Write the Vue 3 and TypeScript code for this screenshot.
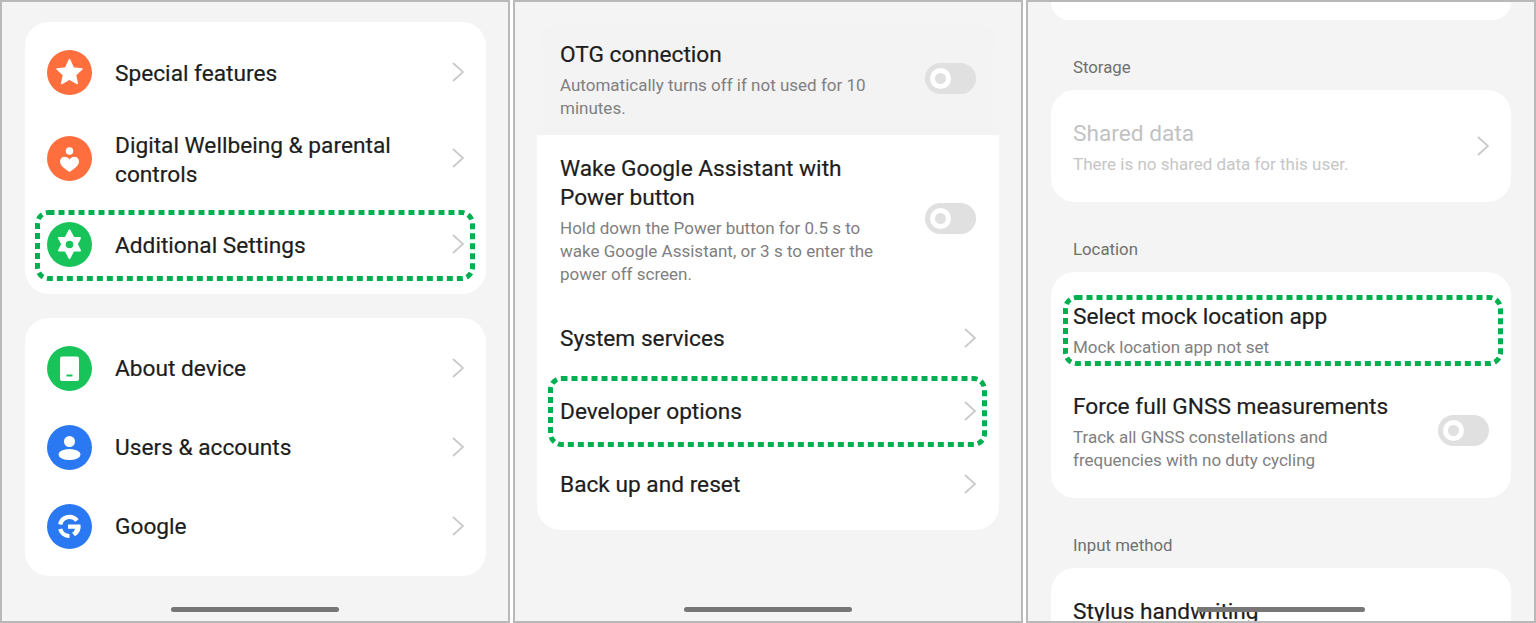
<template>
  <div class="page">
    <!-- Left screen -->
    <section class="screen left-screen">
      <div class="card first-card">
        <div v-for="item in mainItems" :key="item.title" class="row icon-row" :class="{ tall: item.tall }">
          <svg class="round-icon" viewBox="0 0 45 45" width="45" height="45">
            <circle cx="22.5" cy="22.5" r="22.5" :fill="item.color" />
            <template v-if="item.icon === 'star'">
              <polygon points="22.5,9.500 26.300,17.900 35,18.900 28.500,25 30.300,33.500 22.5,29.200 14.700,33.500 16.500,25 10,18.900 18.700,17.900" fill="#fff" stroke="#fff" stroke-width="1.500" stroke-linejoin="round" />
            </template>
            <template v-else-if="item.icon === 'care'">
              <circle cx="22.5" cy="15" r="3.8" fill="#fff" />
              <path d="M22.5 36c-5-3.4-9.5-6.6-9.5-10.6 0-2.8 2.1-4.6 4.6-4.6 2 0 3.8 1 4.9 2.7 1.100-1.700 2.900-2.700 4.900-2.700 2.500 0 4.600 1.800 4.600 4.600 0 4-4.500 7.200-9.500 10.600z" fill="#fff" />
            </template>
            <template v-else>
              <polygon points="22.5,8.500 33,28.500 12,28.500" fill="#fff" stroke="#fff" stroke-width="2" stroke-linejoin="round" />
              <polygon points="22.5,36 12,16 33,16" fill="#fff" stroke="#fff" stroke-width="2" stroke-linejoin="round" />
              <circle cx="22.5" cy="22.5" r="3.800" :fill="item.color" />
            </template>
          </svg>
          <span class="title">{{ item.title }}</span>
          <svg class="chevron" viewBox="0 0 12 20" width="12" height="20"><path d="M1 1l10 9-10 9" /></svg>
          <svg v-if="item.marked" class="mark mark-additional" width="440" height="71">
            <rect x="2.500" y="2.500" width="435" height="66" rx="11" />
          </svg>
        </div>
      </div>

      <div class="card second-card">
        <div v-for="item in deviceItems" :key="item.title" class="row icon-row">
          <svg class="round-icon" viewBox="0 0 45 45" width="45" height="45">
            <circle cx="22.5" cy="22.5" r="22.5" :fill="item.color" />
            <template v-if="item.icon === 'device'">
              <rect x="13" y="10.500" width="19" height="24.500" rx="2" fill="#fff" />
              <rect x="19.500" y="28.500" width="6" height="2" :fill="item.color" />
            </template>
            <template v-else-if="item.icon === 'user'">
              <circle cx="22.500" cy="16.500" r="5.500" fill="#fff" />
              <ellipse cx="22.500" cy="29.500" rx="11" ry="5.500" fill="#fff" />
            </template>
            <template v-else>
              <path d="M30 16.500A9.500 9.500 0 0 0 13.200 20.500M13.200 25A9.500 9.500 0 0 0 22.500 32" fill="none" stroke="#fff" stroke-width="4.200" />
              <path d="M21 20.500h12.500a11 11 0 0 1-5.500 11.800l-3-3.500c1.800-1 2.800-2.500 3-4h-7z" fill="#fff" />
            </template>
          </svg>
          <span class="title">{{ item.title }}</span>
          <svg class="chevron" viewBox="0 0 12 20" width="12" height="20"><path d="M1 1l10 9-10 9" /></svg>
        </div>
      </div>
      <div class="home-bar"></div>
    </section>

    <!-- Middle screen -->
    <section class="screen middle-screen">
      <div class="card middle-card">
        <div class="row text-row otg-row">
          <div class="text">
            <div class="title">OTG connection</div>
            <div class="sub">Automatically turns off if not used for 10 minutes.</div>
          </div>
          <div class="toggle"><span class="knob"></span></div>
        </div>
        <div class="row text-row wake-row">
          <div class="text">
            <div class="title">Wake Google Assistant with Power button</div>
            <div class="sub">Hold down the Power button for 0.5 s to wake Google Assistant, or 3 s to enter the power off screen.</div>
          </div>
          <div class="toggle"><span class="knob"></span></div>
        </div>
        <div v-for="item in systemItems" :key="item.title" class="row plain-row">
          <span class="title">{{ item.title }}</span>
          <svg class="chevron" viewBox="0 0 12 20" width="12" height="20"><path d="M1 1l10 9-10 9" /></svg>
          <svg v-if="item.marked" class="mark mark-developer" width="439" height="71">
            <rect x="2.500" y="2.500" width="434" height="66" rx="11" />
          </svg>
        </div>
      </div>
      <div class="home-bar"></div>
    </section>

    <!-- Right screen -->
    <section class="screen right-screen">
      <div class="card stub-card"></div>

      <div class="section-label">Storage</div>
      <div class="card">
        <div class="row text-row shared-row">
          <div class="text">
            <div class="title disabled">Shared data</div>
            <div class="sub disabled">There is no shared data for this user.</div>
          </div>
          <svg class="chevron" viewBox="0 0 12 20" width="12" height="20"><path d="M1 1l10 9-10 9" /></svg>
        </div>
      </div>

      <div class="section-label">Location</div>
      <div class="card location-card">
        <div class="row text-row mock-row">
          <div class="text">
            <div class="title">Select mock location app</div>
            <div class="sub">Mock location app not set</div>
          </div>
          <svg class="mark mark-mock" width="440" height="71">
            <rect x="2.500" y="2.500" width="435" height="66" rx="11" />
          </svg>
        </div>
        <div class="row text-row gnss-row">
          <div class="text">
            <div class="title">Force full GNSS measurements</div>
            <div class="sub">Track all GNSS constellations and frequencies with no duty cycling</div>
          </div>
          <div class="toggle"><span class="knob"></span></div>
        </div>
      </div>

      <div class="section-label">Input method</div>
      <div class="card">
        <div class="row stylus-row">
          <div class="title">Stylus handwriting</div>
        </div>
      </div>
      <div class="home-bar"></div>
    </section>
  </div>
</template>

<script setup lang="ts">
interface IconItem {
  title: string
  color: string
  icon: string
  tall?: boolean
  marked?: boolean
}

const orange = '#ff6e3d'
const green = '#18c45a'
const blue = '#2b79f2'

const mainItems: IconItem[] = [
  { title: 'Special features', color: orange, icon: 'star' },
  { title: 'Digital Wellbeing & parental controls', color: orange, icon: 'care', tall: true },
  { title: 'Additional Settings', color: green, icon: 'gear', marked: true }
]

const deviceItems: IconItem[] = [
  { title: 'About device', color: green, icon: 'device' },
  { title: 'Users & accounts', color: blue, icon: 'user' },
  { title: 'Google', color: blue, icon: 'google' }
]

const systemItems = [
  { title: 'System services', marked: false },
  { title: 'Developer options', marked: true },
  { title: 'Back up and reset', marked: false }
]
</script>

<style>
html,
body {
  margin: 0;
  background: #fff;
}
</style>

<style scoped>
.page {
  display: grid;
  grid-template-columns: repeat(3, 510px);
  gap: 3px;
  width: 1536px;
  height: 623px;
  font-family: Roboto, "Liberation Sans", sans-serif;
  overflow: hidden;
}

.screen {
  position: relative;
  box-sizing: border-box;
  height: 623px;
  background: #f4f4f4;
  border: 2px solid #b9b9b9;
  overflow: hidden;
}

.left-screen {
  padding: 20px 22px 0 23px;
}

.middle-screen {
  padding: 20px 22px 0;
}

.right-screen {
  padding: 20px 23px 0;
}

.card {
  background: #fff;
  border-radius: 24px;
}

.first-card {
  padding: 10.5px 0;
  margin-bottom: 24px;
}

.second-card {
  padding: 10.5px 0;
}

.second-card .title {
  padding-top: 0;
}

.row {
  position: relative;
  display: flex;
  align-items: center;
  box-sizing: border-box;
}

.icon-row {
  height: 79px;
  padding: 0 22px;
}

.icon-row.tall {
  height: 93px;
}

.icon-row.tall .title {
  padding-top: 4px;
}

.round-icon {
  flex: none;
  margin-right: 23px;
}

.title {
  flex: 1;
  padding-top: 2px;
  font-size: 22.700px;
  line-height: 29px;
  color: #1d1d1d;
  -webkit-text-stroke: 0.2px #1d1d1d;
}

.chevron {
  flex: none;
  fill: none;
  stroke: #c9c9c9;
  stroke-width: 1.800;
}

.mark {
  position: absolute;
  fill: none;
  stroke: #00b050;
  stroke-width: 5;
  stroke-dasharray: 6 4;
  pointer-events: none;
}

.mark-additional {
  left: 10px;
  top: 5px;
}

.mark-developer {
  left: 11px;
  top: 2px;
}

.mark-mock {
  left: 12px;
  top: 23px;
}

.middle-card {
  padding-bottom: 10px;
}

.text-row {
  justify-content: space-between;
  padding: 0 23px;
}

.right-screen .text-row {
  padding: 0 22px;
}

.text {
  flex: 1;
  min-width: 0;
  padding-top: 3px;
}

.text .title {
  padding-top: 0;
}

.sub {
  font-size: 17px;
  line-height: 23px;
  color: #808080;
  margin-top: 5px;
}

.otg-row {
  height: 113px;
  background: #f3f3f3;
  border-radius: 24px 24px 0 0;
}

.otg-row .text {
  max-width: 340px;
}

.wake-row {
  height: 166px;
}

.wake-row .text {
  max-width: 335px;
}

.plain-row {
  height: 73px;
  padding: 0 23px;
}

.toggle {
  flex: none;
  box-sizing: border-box;
  width: 51px;
  height: 31px;
  padding: 5px;
  background: #e0e0e0;
  border-radius: 16px;
}

.knob {
  display: block;
  box-sizing: border-box;
  width: 21px;
  height: 21px;
  border: 5px solid #fff;
  border-radius: 50%;
  background: #e0e0e0;
}

.stub-card {
  height: 18px;
  margin-top: -20px;
  border-radius: 0 0 24px 24px;
}

.section-label {
  padding: 0 22px;
  font-size: 16.800px;
  line-height: 22px;
  color: #6f6f6f;
  margin: 36px 0 12px;
}

.shared-row {
  height: 112px;
}

.title.disabled {
  color: #c2c2c2;
  -webkit-text-stroke: 0;
}

.sub.disabled {
  color: #c6c6c6;
}

.location-card {
  padding-bottom: 24px;
}

.mock-row {
  height: 114px;
}

.gnss-row {
  height: 88px;
}

.gnss-row .sub {
  max-width: 315px;
}

.stylus-row {
  height: 90px;
  align-items: flex-start;
  padding: 27px 22px 0;
}

.home-bar {
  position: absolute;
  left: 169px;
  bottom: 9px;
  width: 168px;
  height: 5px;
  border-radius: 3px;
  background: #777;
}
</style>
